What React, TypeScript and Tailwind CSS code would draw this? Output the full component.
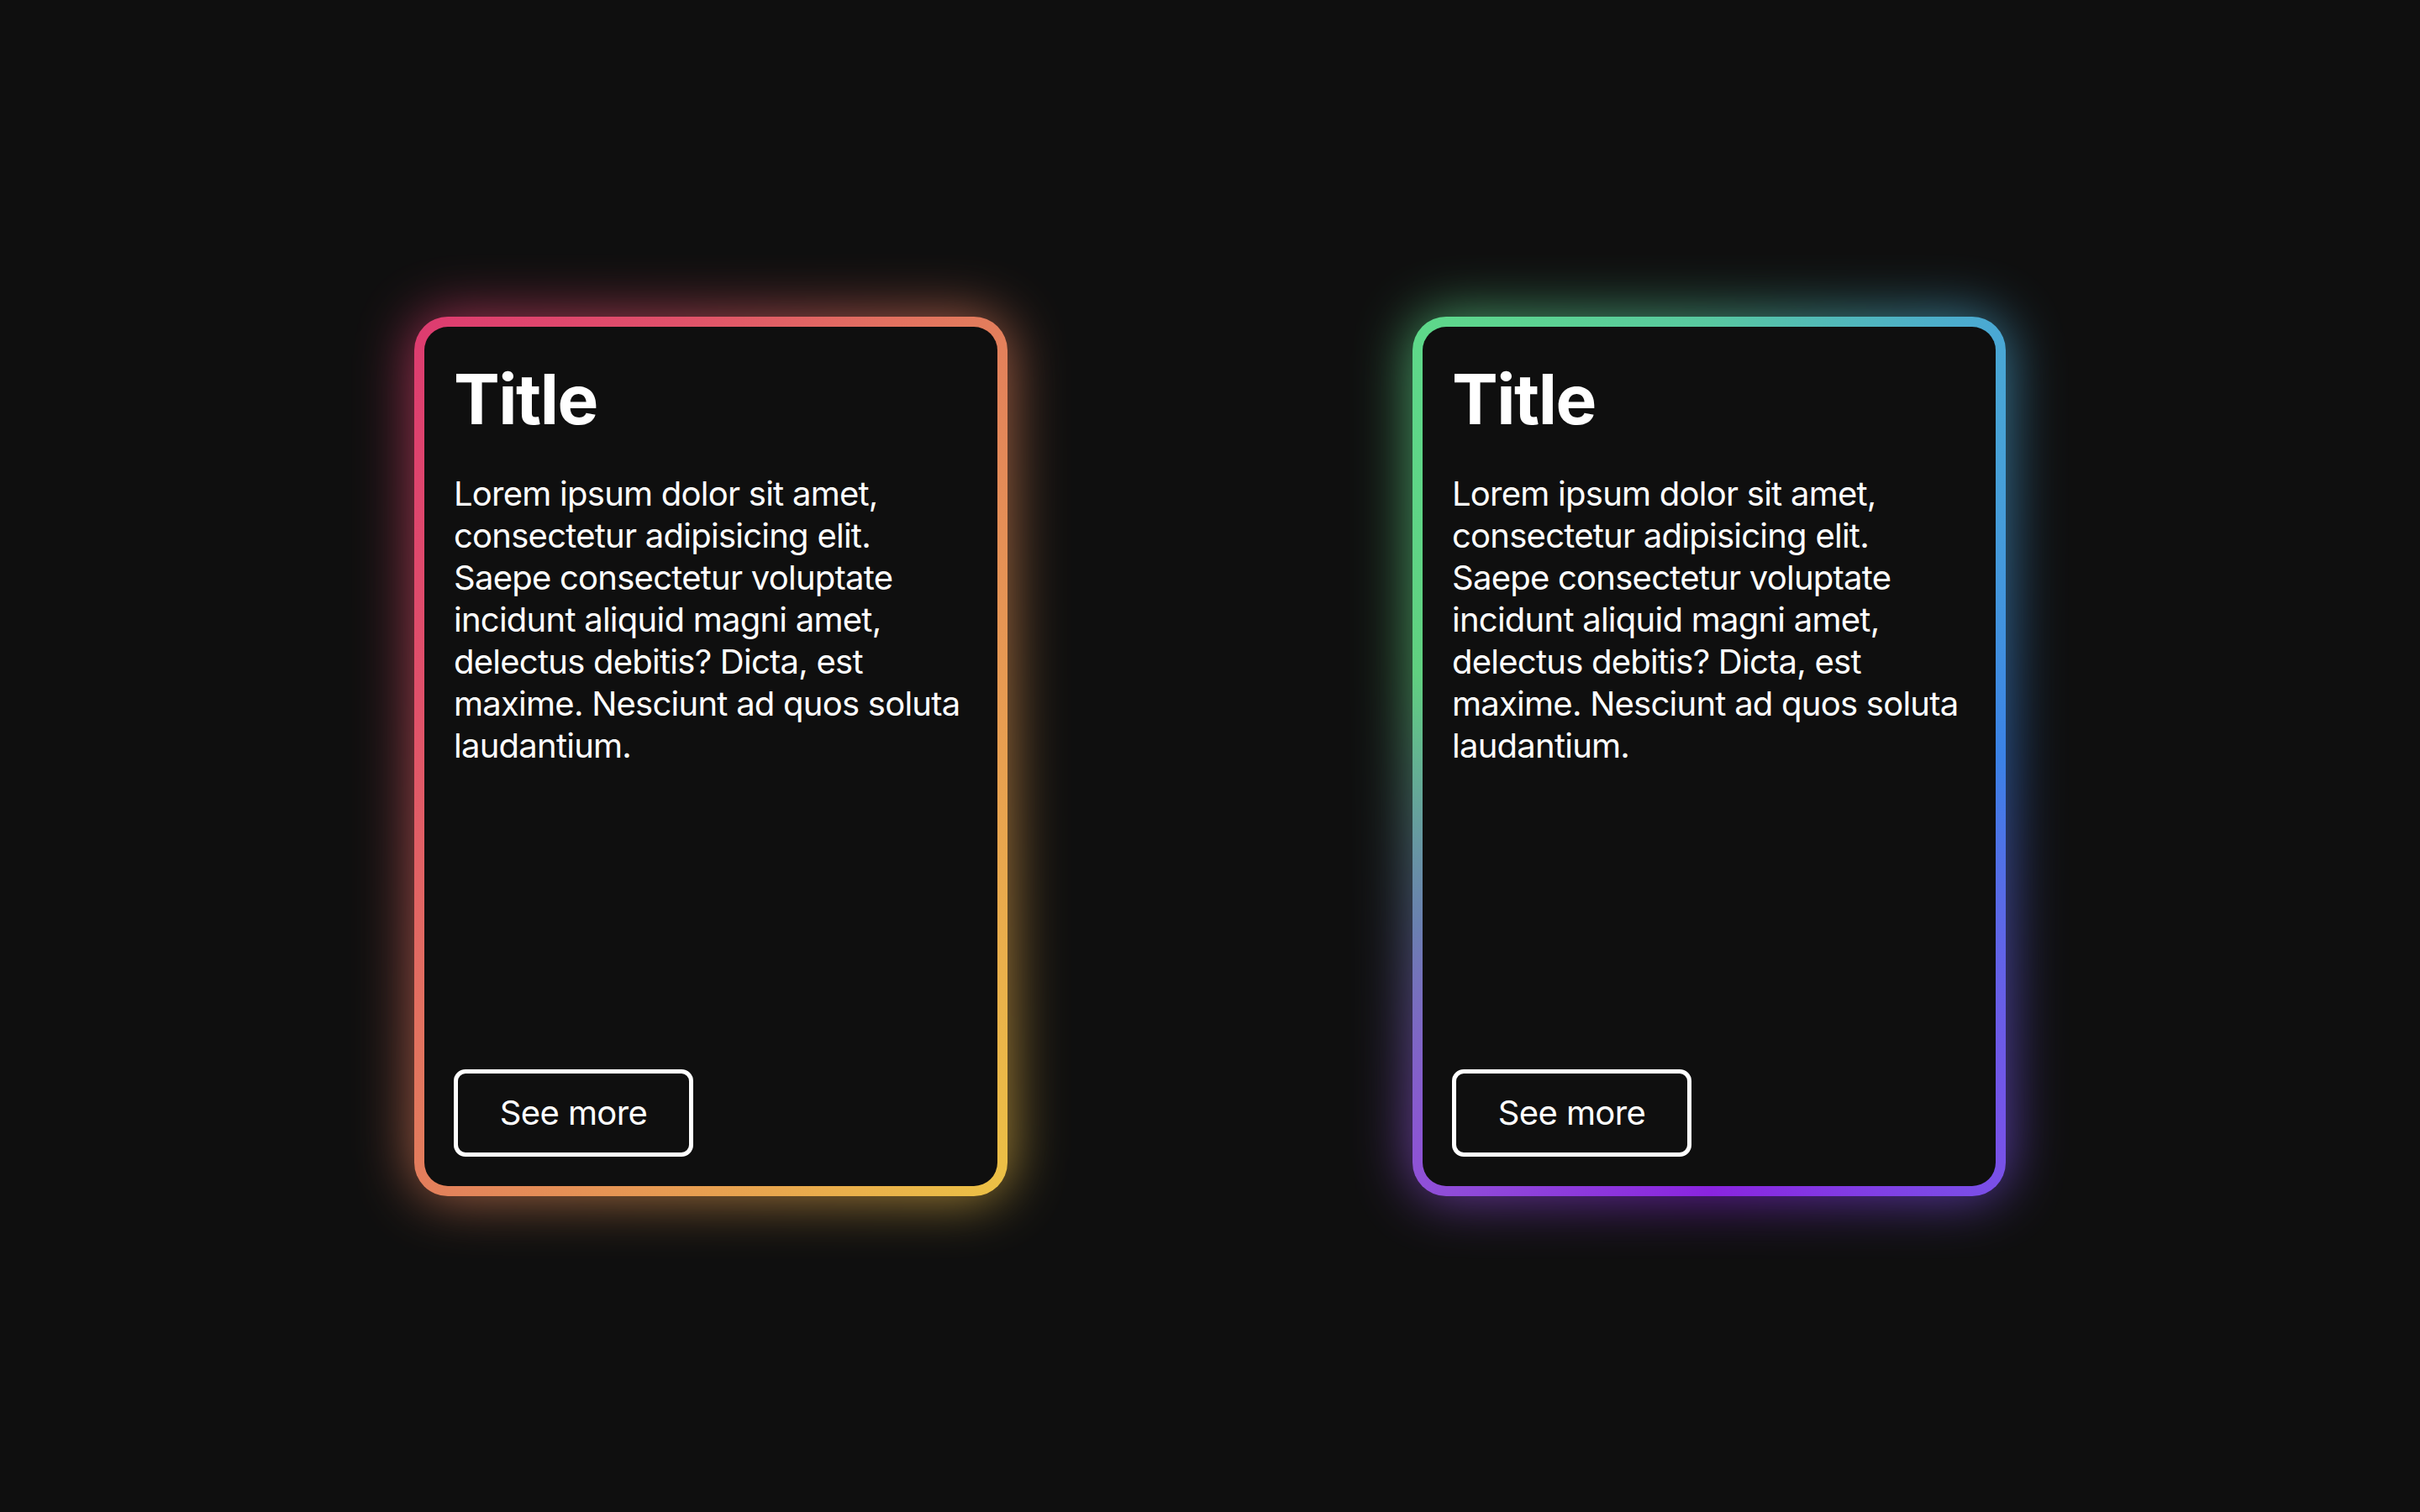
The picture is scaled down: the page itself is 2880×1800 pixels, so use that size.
import React from "react";

const text =
  "Lorem ipsum dolor sit amet, consectetur adipisicing elit. Saepe consectetur voluptate incidunt aliquid magni amet, delectus debitis? Dicta, est maxime. Nesciunt ad quos soluta laudantium.";

function Card({ variant }: { variant: "warm" | "cool" }) {
  const grad =
    variant === "warm"
      ? "bg-[linear-gradient(to_bottom_right,#dd3b70_0%,#e0506a_22%,#e27060_40%,#e48a58_58%,#e8a050_75%,#ecc245_100%)]"
      : "bg-[conic-gradient(from_0deg,#58c8a0_0deg,#4aa8d4_34deg,#3b82e6_90deg,#7a50e8_146deg,#8a24e0_180deg,#9050d8_214deg,#6a80b0_240deg,#60d080_286deg,#5ed88a_326deg,#58c8a0_360deg)]";
  return (
    <div className="relative w-[706px] h-[1047px]">
      <div className={`absolute inset-0 rounded-[40px] blur-[34px] opacity-75 ${grad}`} />
      <div className={`relative h-full rounded-[40px] p-[12px] ${grad}`}>
        <div className="flex h-full flex-col rounded-[28px] bg-[#0f0f0f] px-[35px] pt-[46px] pb-[35px] text-white">
          <h2 className="text-[82px] font-bold leading-none tracking-[-1.5px]">Title</h2>
          <p className="mt-[46px] text-[40px] leading-[50px] tracking-[-0.75px]">{text}</p>
          <button className="mt-auto flex h-[104px] w-[285px] items-center justify-center rounded-[14px] border-[5px] border-white text-[40px] tracking-[-0.6px]">
            See more
          </button>
        </div>
      </div>
    </div>
  );
}

export default function App() {
  return (
    <div
      className="flex h-screen w-full items-center justify-center gap-[482px] bg-[#0f0f0f]"
      style={{ fontFamily: "Inter, 'Noto Sans', sans-serif" }}
    >
      <Card variant="warm" />
      <Card variant="cool" />
    </div>
  );
}
